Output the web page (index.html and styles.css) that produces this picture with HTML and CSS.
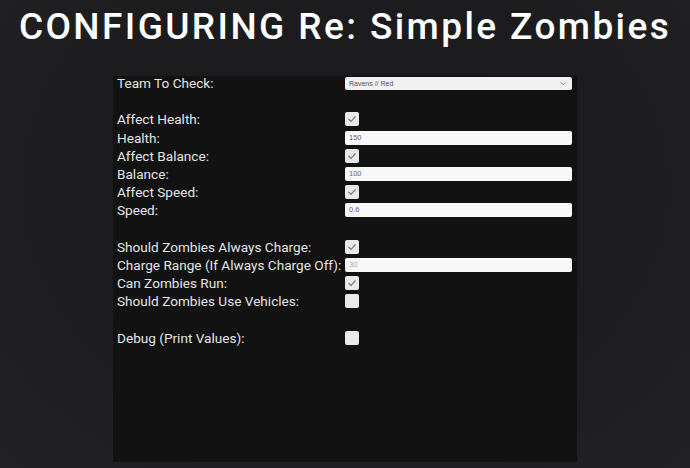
FILE: index.html
```html
<!DOCTYPE html>
<html>
<head>
<meta charset="utf-8">
<link rel="stylesheet" href="styles.css">
</head>
<body>
<div class="page">
  <h1 class="title">CONFIGURING Re: Simple Zombies</h1>
  <div class="panel">
    <div class="grid">
      <div class="label">Team To Check:</div>
      <div class="select"><span>Ravens // Red</span><svg class="chev" viewBox="0 0 8 5" width="7" height="5"><path d="M1 1 L4 4 L7 1" fill="none" stroke="#888" stroke-width="1"/></svg></div>

      <div class="label"></div><div></div>

      <div class="label">Affect Health:</div>
      <div class="check on"><svg viewBox="0 0 14 14" width="14" height="14"><path d="M3.5 7 L6 9.5 L10.5 4.5" fill="none" stroke="#7c7c7c" stroke-width="1.2"/></svg></div>
      <div class="label">Health:</div>
      <div class="input">150</div>
      <div class="label">Affect Balance:</div>
      <div class="check on"><svg viewBox="0 0 14 14" width="14" height="14"><path d="M3.5 7 L6 9.5 L10.5 4.5" fill="none" stroke="#7c7c7c" stroke-width="1.2"/></svg></div>
      <div class="label">Balance:</div>
      <div class="input">100</div>
      <div class="label">Affect Speed:</div>
      <div class="check on"><svg viewBox="0 0 14 14" width="14" height="14"><path d="M3.5 7 L6 9.5 L10.5 4.5" fill="none" stroke="#7c7c7c" stroke-width="1.2"/></svg></div>
      <div class="label">Speed:</div>
      <div class="input">0.6</div>

      <div class="label"></div><div></div>

      <div class="label">Should Zombies Always Charge:</div>
      <div class="check on"><svg viewBox="0 0 14 14" width="14" height="14"><path d="M3.5 7 L6 9.5 L10.5 4.5" fill="none" stroke="#7c7c7c" stroke-width="1.2"/></svg></div>
      <div class="label">Charge Range (If Always Charge Off):</div>
      <div class="input faint">30</div>
      <div class="label">Can Zombies Run:</div>
      <div class="check on"><svg viewBox="0 0 14 14" width="14" height="14"><path d="M3.5 7 L6 9.5 L10.5 4.5" fill="none" stroke="#7c7c7c" stroke-width="1.2"/></svg></div>
      <div class="label">Should Zombies Use Vehicles:</div>
      <div class="check"></div>

      <div class="label"></div><div></div>

      <div class="label">Debug (Print Values):</div>
      <div class="check"></div>
    </div>
  </div>
</div>
</body>
</html>
```
FILE: styles.css
```css
html, body {
  margin: 0;
  padding: 0;
}
body {
  width: 690px;
  height: 468px;
  overflow: hidden;
  background: radial-gradient(ellipse at 50% 40%, #1b1a20 0%, #1c1c1e 55%, #222224 100%);
  font-family: Roboto, "Liberation Sans", sans-serif;
}
.page {
  display: flex;
  flex-direction: column;
  align-items: center;
}
.title {
  margin: 5px 0 0 0;
  height: 71px;
  font-family: Roboto, "Liberation Sans", sans-serif;
  font-weight: 500;
  font-size: 37px;
  line-height: 44px;
  letter-spacing: 2.4px;
  color: #ffffff;
  white-space: nowrap;
}
.panel {
  width: 464px;
  height: 386px;
  padding-left: 4px;
  background: #121212;
  box-sizing: border-box;
}
.grid {
  display: grid;
  grid-template-columns: 228px 227px;
  grid-auto-rows: 14px;
  row-gap: 4.2px;
  align-items: center;
}
.label {
  color: #e4e4e4;
  font-size: 13.6px;
  line-height: 14px;
  white-space: nowrap;
}
.select {
  height: 13px;
  background: #f1f1f1;
  border-radius: 2px;
  display: flex;
  align-items: center;
  justify-content: space-between;
  padding: 0 5px 0 4px;
  font-family: "Liberation Sans", sans-serif;
  font-size: 7px;
  color: #555;
}
.chev {
  display: block;
}
.input {
  height: 14px;
  background: #f8f8f8;
  border-radius: 2px;
  padding-left: 4px;
  font-family: "Liberation Sans", sans-serif;
  font-size: 7.5px;
  line-height: 14px;
  color: #666;
}
.input.faint {
  color: #aaa;
}
.check {
  width: 14px;
  height: 14px;
  background: #e9e9e9;
  border-radius: 2px;
}
.check svg {
  display: block;
}
```
